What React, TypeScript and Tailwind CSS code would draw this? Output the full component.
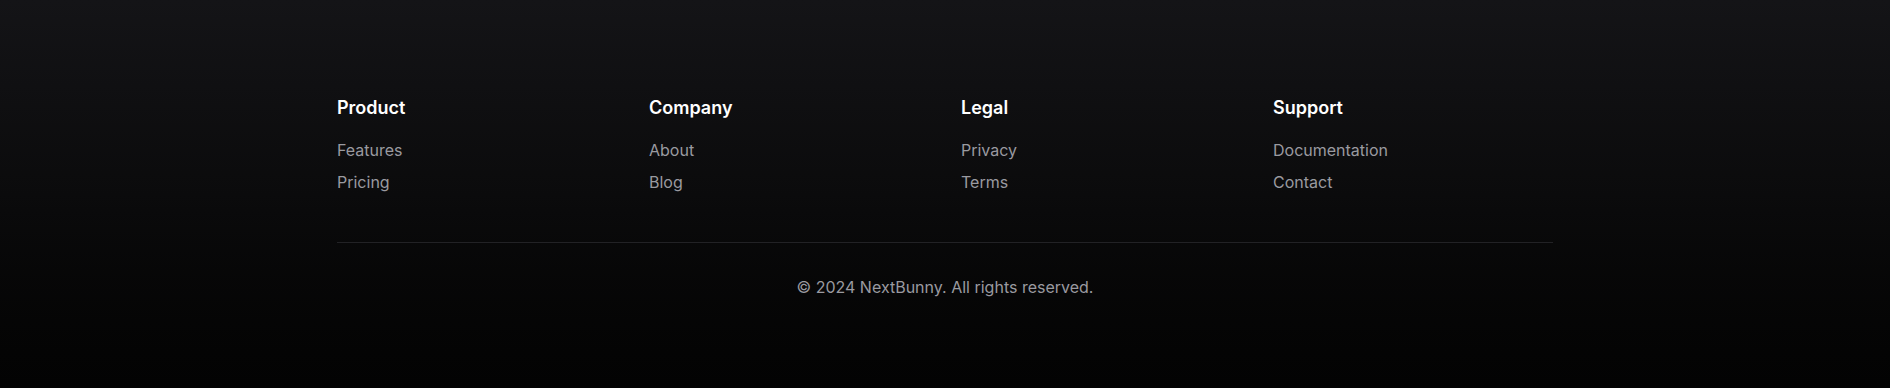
const columns = [
  { title: "Product", links: ["Features", "Pricing"] },
  { title: "Company", links: ["About", "Blog"] },
  { title: "Legal", links: ["Privacy", "Terms"] },
  { title: "Support", links: ["Documentation", "Contact"] },
];

export default function App() {
  return (
    <footer
      className="min-h-[388px] bg-gradient-to-b from-[#141417] via-[#0b0b0c] to-[#030303] font-['Inter',sans-serif]"
    >
      <div className="max-w-7xl mx-auto px-8 pt-[94px] pb-20">
        {/* Link columns */}
        <div className="grid grid-cols-4 gap-8">
          {columns.map((col) => (
            <div key={col.title}>
              <h3 className="text-lg font-semibold text-white mb-4">{col.title}</h3>
              <ul className="space-y-2">
                {col.links.map((link) => (
                  <li key={link}>
                    <a href="#" className="text-base text-[#9a9aa0] hover:text-white transition-colors">
                      {link}
                    </a>
                  </li>
                ))}
              </ul>
            </div>
          ))}
        </div>

        {/* Bottom bar */}
        <div className="mt-12 pt-8 border-t border-[#222225] text-center">
          <p className="text-base text-[#9a9aa0]">© 2024 NextBunny. All rights reserved.</p>
        </div>
      </div>
    </footer>
  );
}
